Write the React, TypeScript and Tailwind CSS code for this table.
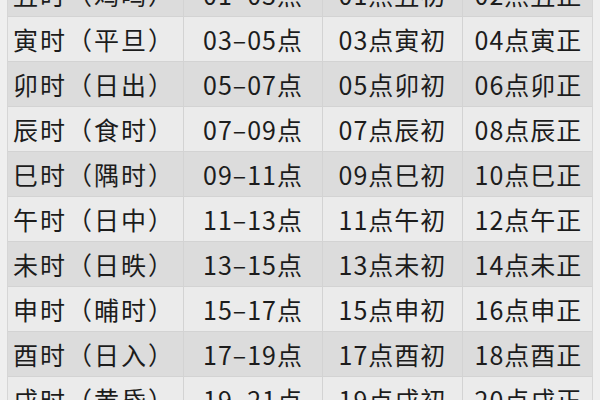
const rows: [string, string, string, string][] = [
  ["丑时（鸡鸣）", "01–03点", "01点丑初", "02点丑正"],
  ["寅时（平旦）", "03–05点", "03点寅初", "04点寅正"],
  ["卯时（日出）", "05–07点", "05点卯初", "06点卯正"],
  ["辰时（食时）", "07–09点", "07点辰初", "08点辰正"],
  ["巳时（隅时）", "09–11点", "09点巳初", "10点巳正"],
  ["午时（日中）", "11–13点", "11点午初", "12点午正"],
  ["未时（日昳）", "13–15点", "13点未初", "14点未正"],
  ["申时（晡时）", "15–17点", "15点申初", "16点申正"],
  ["酉时（日入）", "17–19点", "17点酉初", "18点酉正"],
  ["戌时（黄昏）", "19–21点", "19点戌初", "20点戌正"],
];

export default function App() {
  return (
    <div
      className="w-[600px] h-[400px] overflow-hidden bg-[#efefef] pl-[7px] text-[#1c1c1c]"
      style={{ fontFamily: '"Noto Sans CJK SC", "Noto Sans", sans-serif' }}
    >
      <div className="mt-[-28px] w-[586px] border-l border-r border-[#d6d6d6]">
        {rows.map((r, i) => (
          <div
            key={i}
            className={`grid grid-cols-[176px_139px_140px_131px] h-[45px] border-b border-[#d3d3d3] ${
              i % 2 === 0 ? "bg-[#dcdcdc]" : "bg-[#ebebeb]"
            }`}
          >
            {r.map((c, j) => (
              <div
                key={j}
                className={`flex items-center text-[25px] leading-none ${
                  j === 0 ? "justify-start pl-[5px] tracking-[2px]" : "justify-center tracking-[1px]"
                } ${j < 3 ? "border-r border-[#d3d3d3]" : ""}`}
              >
                {c}
              </div>
            ))}
          </div>
        ))}
      </div>
    </div>
  );
}
